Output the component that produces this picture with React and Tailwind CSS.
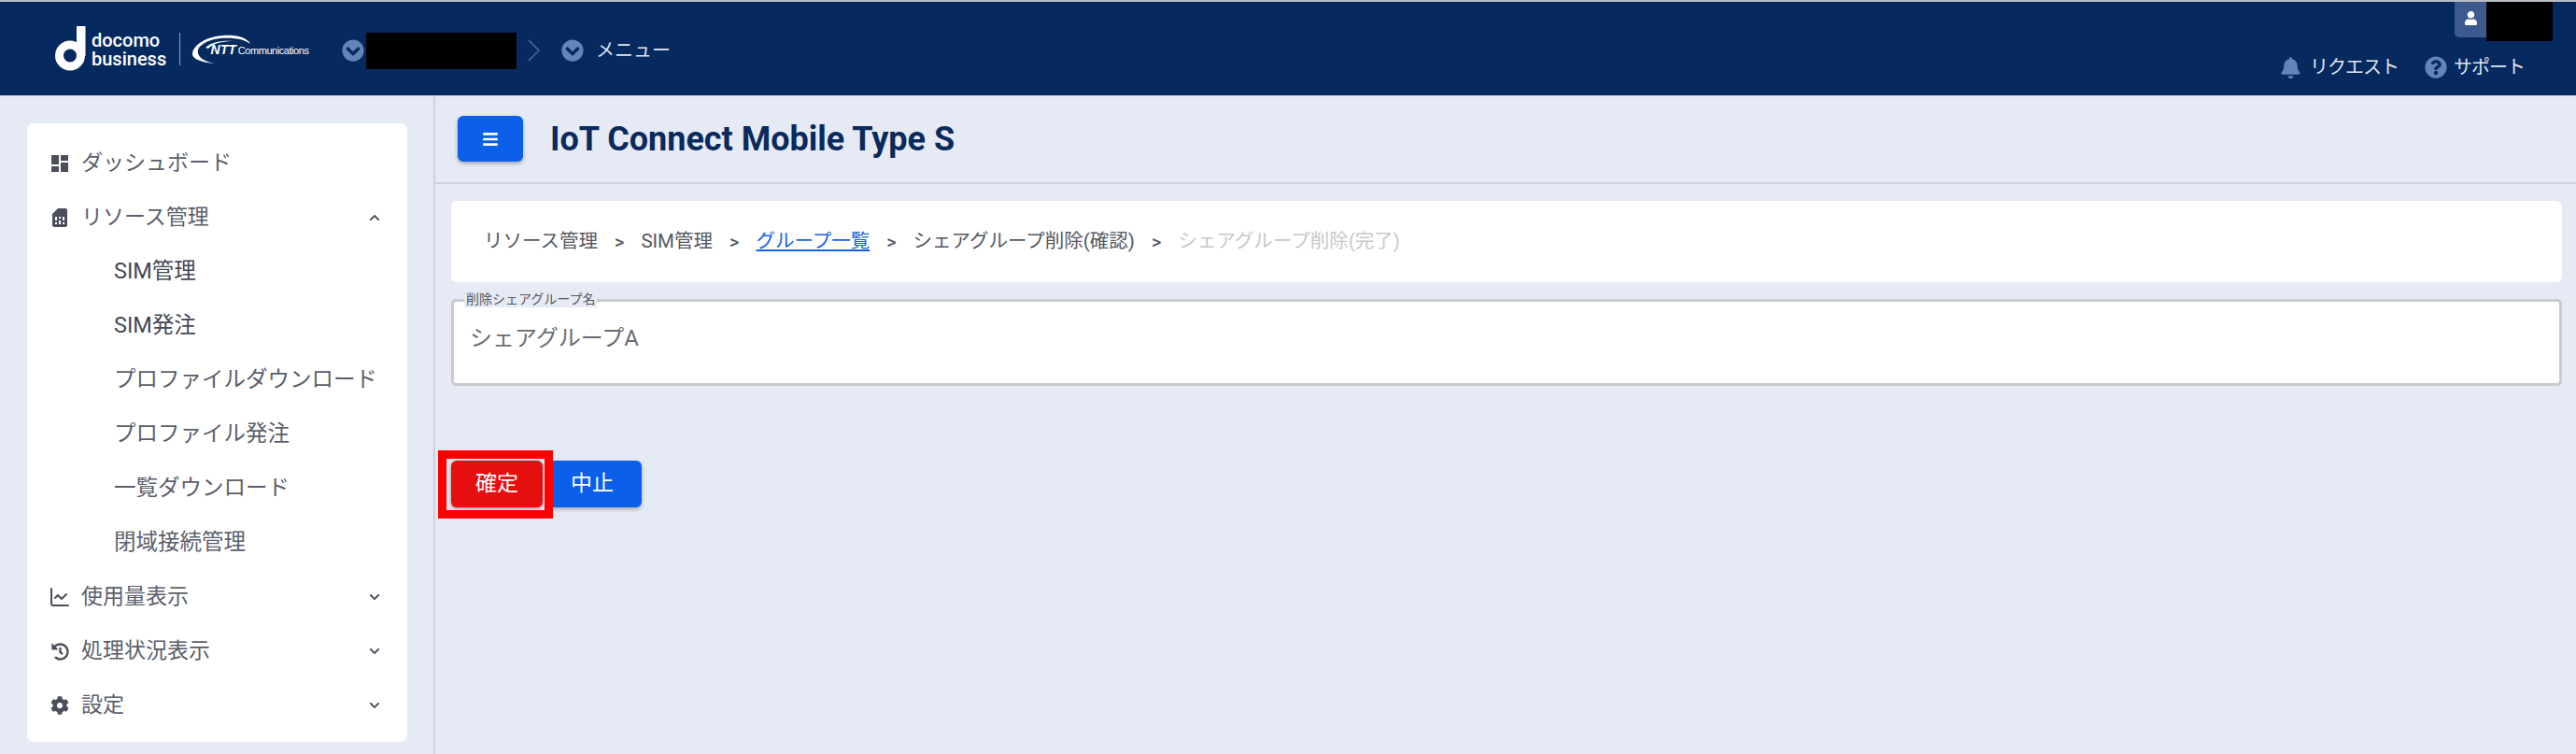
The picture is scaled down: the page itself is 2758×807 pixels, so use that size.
import React from 'react';
import { FaBars, FaBell, FaChevronCircleDown, FaChevronDown, FaChevronUp, FaCog, FaHistory, FaQuestionCircle, FaUser } from 'react-icons/fa';
import { MdDashboard, MdSimCard } from 'react-icons/md';
import { ChartLine } from 'lucide-react';

const subItems = ['SIM管理', 'SIM発注', 'プロファイルダウンロード', 'プロファイル発注', '一覧ダウンロード', '閉域接続管理'];

const Logo = () => (
  <div className="flex items-center w-[278px] h-[48px]">
    <svg width="33" height="48" viewBox="0 0 33 48" className="shrink-0">
      <circle cx="16" cy="31.5" r="11.5" fill="none" stroke="#fff" strokeWidth="9" />
      <rect x="23" y="0" width="9.5" height="32" fill="#fff" />
    </svg>
    <div className="ml-[6px] pt-[2px] w-[86px] flex flex-col text-white text-[20px] leading-[20px] font-medium font-['Roboto',sans-serif]">
      <span>docomo</span>
      <span>business</span>
    </div>
    <div className="w-px h-[35px] bg-[#8fa2c4] ml-[8px]" />
    <div className="relative ml-[11px] w-[134px] h-[34px]">
      <svg width="64" height="34" viewBox="0 0 64 34" className="absolute left-0 top-0">
        <path d="M2 22C4 10 24 1 46 3C56 4 62 8 64 12C56 6 44 5 32 6C16 8 6 15 8 22C9 27 16 31 26 33C12 32 1 28 2 22Z" fill="#fff" />
        <path d="M16 16C22 10 34 8 46 9C36 9 24 11 19 17Z" fill="#fff" />
      </svg>
      <div className="absolute left-[22px] top-[10px] flex items-baseline text-white whitespace-nowrap font-['Liberation_Sans',sans-serif]">
        <span className="text-[14px] leading-[16px] font-bold italic">NTT</span>
        <span className="ml-[2px] text-[11px] leading-[16px] tracking-[-0.45px]">Communications</span>
      </div>
    </div>
  </div>
);

const NavGroup = ({ icon, label, open, hasArrow = true }) => (
  <div className="h-[58px] flex items-center pl-[26px] pr-[29px] text-[23px] text-[#5b5f6b]">
    <span className="w-[18px] flex justify-center text-[#4b4f5c]">{icon}</span>
    <span className="ml-[14px] flex-1">{label}</span>
    {hasArrow && (open ? <FaChevronUp size={12} className="text-[#4b4f5c]" /> : <FaChevronDown size={12} className="text-[#4b4f5c]" />)}
  </div>
);

const Crumb = () => <span className="mx-[18px] text-[#55585f] text-[20px] font-medium">&gt;</span>;

export default function App() {
  return (
    <div className="w-[2758px] h-[807px] overflow-hidden flex flex-col bg-[#e6eaf4] font-['Roboto','Noto_Sans_CJK_JP',sans-serif]">
      <div className="h-[2px] bg-[#b9bcc4]" />
      <header className="h-[100px] bg-[#06295f] flex pl-[59px] pr-[25px] shadow-[0_1px_0_#c8d0e0]">
        <div className="flex items-center h-[100px]">
          <Logo />
          <div className="flex items-center pt-[4px]">
            <FaChevronCircleDown size={24} className="ml-[29px] text-[#6384bb]" />
            <div className="ml-[2px] w-[161px] h-[39px] bg-black" />
            <svg width="13" height="24" viewBox="0 0 13 24" className="ml-[12px]" fill="none" stroke="#4e6a9a" strokeWidth="1.5">
              <path d="M1 1L12 12L1 23" />
            </svg>
            <FaChevronCircleDown size={24} className="ml-[23px] text-[#6384bb]" />
            <span className="ml-[13px] text-[20px] text-[#dfe5f0]">メニュー</span>
          </div>
        </div>
        <div className="ml-auto flex flex-col items-end">
          <div className="flex h-[42px]">
            <div className="w-[34px] h-[38px] bg-[#3d5a8f] rounded-bl-[5px] flex items-center justify-center pb-[4px]">
              <FaUser size={15} className="text-white" />
            </div>
            <div className="w-[71px] h-[42px] bg-black" />
          </div>
          <div className="flex items-center mt-[13px] text-[20px] text-[#dfe5f0] pr-[30px]">
            <FaBell size={23} className="text-[#6384bb]" />
            <span className="ml-[9px] tracking-[-1px]">リクエスト</span>
            <FaQuestionCircle size={24} className="ml-[28px] text-[#6384bb]" />
            <span className="ml-[7px] tracking-[-1px]">サポート</span>
          </div>
        </div>
      </header>

      <div className="flex-1 flex min-h-0">
        <aside className="w-[464px] pl-[29px] pt-[30px] shrink-0">
          <nav className="w-[407px] h-[662px] bg-white rounded-[7px] pt-[14px]">
            <NavGroup icon={<MdDashboard size={24} className="shrink-0" />} label="ダッシュボード" hasArrow={false} />
            <NavGroup icon={<MdSimCard size={24} className="shrink-0" />} label="リソース管理" open />
            {subItems.map((item, i) => (
              <div key={item} className={i < 2 ? 'h-[58px] flex items-center pl-[93px] text-[23.5px] text-[#444854] whitespace-nowrap' : 'h-[58px] flex items-center pl-[93px] text-[23.5px] text-[#5b5f6b] whitespace-nowrap'}>
                {item}
              </div>
            ))}
            <NavGroup icon={<ChartLine size={24} strokeWidth={2} className="shrink-0" />} label="使用量表示" />
            <NavGroup icon={<FaHistory size={19} className="shrink-0" />} label="処理状況表示" />
            <NavGroup icon={<FaCog size={20} className="shrink-0" />} label="設定" />
          </nav>
        </aside>

        <main className="flex-1 border-l-2 border-[#cdd2de] min-w-0">
          <div className="h-[95px] border-b-2 border-[#cdd2de] flex items-center pl-[24px]">
            <button className="w-[70px] h-[49px] rounded-[6px] bg-[#0b5fe8] shadow-[0_2px_4px_rgba(0,0,0,0.3)] flex items-center justify-center">
              <FaBars size={18} className="text-white" />
            </button>
            <h1 className="ml-[29px] text-[36px] font-bold text-[#0a2a5e]">IoT Connect Mobile Type S</h1>
          </div>

          <div className="pl-[17px] pr-[15px] pt-[18px]">
            <div className="h-[87px] bg-white rounded-[6px] flex items-center pl-[35px] text-[20.5px] text-[#55585f] whitespace-nowrap">
              <span>リソース管理</span>
              <Crumb />
              <span>SIM管理</span>
              <Crumb />
              <span className="text-[#1a62e0] underline">グループ一覧</span>
              <Crumb />
              <span>シェアグループ削除(確認)</span>
              <Crumb />
              <span className="text-[#c8c8c8]">シェアグループ削除(完了)</span>
            </div>

            <div className="relative mt-[18px] h-[93px] bg-white border-[3px] border-[#c9cacb] rounded-[5px] pl-[17px] pt-[23px]">
              <span className="absolute left-[11px] -top-[12px] px-[2px] bg-[#e6eaf4] text-[14px] leading-[18px] text-[#55585f]">削除シェアグループ名</span>
              <div className="text-[24px] leading-[32px] text-[#6a6d75]">シェアグループA</div>
            </div>

            <div className="mt-[80px] flex">
              <div className="relative z-10 -ml-[14px] -mr-[11px] -mt-[11px] -mb-[12px] border-[9px] border-[#ff0000] bg-[#e2e3e6] pl-[5px] pr-[2px] pt-[2px] pb-[3px]">
                <button className="block w-[98px] h-[50px] rounded-[6px] bg-[#e60f0f] text-white text-[23px] shadow-[0_1px_3px_rgba(0,0,0,0.4)]">
                  確定
                </button>
              </div>
              <button className="w-[106px] h-[50px] rounded-[6px] bg-[#0b5fe8] text-white text-[23px] shadow-[0_2px_4px_rgba(0,0,0,0.3)]">
                中止
              </button>
            </div>
          </div>
        </main>
      </div>
    </div>
  );
}
